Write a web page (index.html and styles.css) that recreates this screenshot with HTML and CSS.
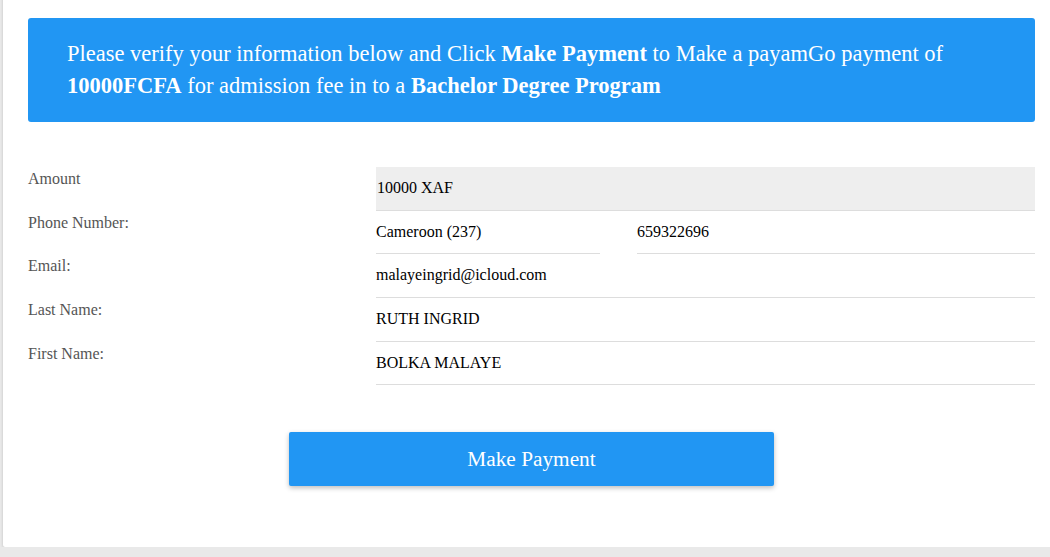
FILE: index.html
```html
<!DOCTYPE html>
<html>
<head>
<meta charset="utf-8">
<link rel="stylesheet" href="styles.css">
</head>
<body>
<div class="card">
  <div class="notice">
    Please verify your information below and Click <b>Make Payment</b> to Make a payamGo payment of <b>10000FCFA</b> for admission fee in to a <b>Bachelor Degree Program</b>
  </div>
  <div class="form">
    <div class="label">Amount</div>
    <div class="value shaded">10000 XAF</div>
    <div class="label">Phone Number:</div>
    <div class="phone">
      <div class="value">Cameroon (237)</div>
      <div class="value">659322696</div>
    </div>
    <div class="label">Email:</div>
    <div class="value">malayeingrid@icloud.com</div>
    <div class="label">Last Name:</div>
    <div class="value">RUTH INGRID</div>
    <div class="label">First Name:</div>
    <div class="value">BOLKA MALAYE</div>
  </div>
  <div class="actions">
    <button class="pay">Make Payment</button>
  </div>
</div>
</body>
</html>
```
FILE: styles.css
```css
html, body {
  margin: 0;
  padding: 0;
  background: #e9e9e9;
  overflow: hidden;
  font-family: "Liberation Serif", "Times New Roman", serif;
}
.card {
  background: #fff;
  margin: -10px -20px 0 3px;
  padding: 28px 35px 61px 25px;
  border-radius: 2px;
  box-shadow: 0 1px 3px rgba(0,0,0,0.18);
}
.notice {
  background: #2196f3;
  color: #fff;
  border-radius: 3px;
  font-size: 22.5px;
  line-height: 31.5px;
  padding: 20px 39px 20px 39px;
  height: 64px;
}
.notice b { font-weight: bold; }
.form {
  margin-top: 45px;
  display: grid;
  grid-template-columns: 348px 1fr;
}
.label {
  font-size: 16px;
  line-height: 20px;
  color: #555;
  padding-top: 2px;
  height: 41.7px;
}
.value {
  font-size: 16px;
  line-height: 20px;
  color: #000;
  padding: 11px 0 11.7px 0;
  border-bottom: 1px solid #ddd;
  height: 20px;
}
.shaded {
  background: #eee;
  padding-left: 1px;
}
.phone {
  display: grid;
  grid-template-columns: 224px 1fr;
  column-gap: 37px;
}
.actions {
  display: flex;
  justify-content: center;
  margin-top: 47px;
}
.pay {
  width: 485px;
  height: 54px;
  background: #2196f3;
  color: #fff;
  border: none;
  border-radius: 2px;
  font-family: "Liberation Serif", "Times New Roman", serif;
  font-size: 21.3px;
  box-shadow: 0 2px 5px rgba(0,0,0,0.26);
  cursor: pointer;
}
```
